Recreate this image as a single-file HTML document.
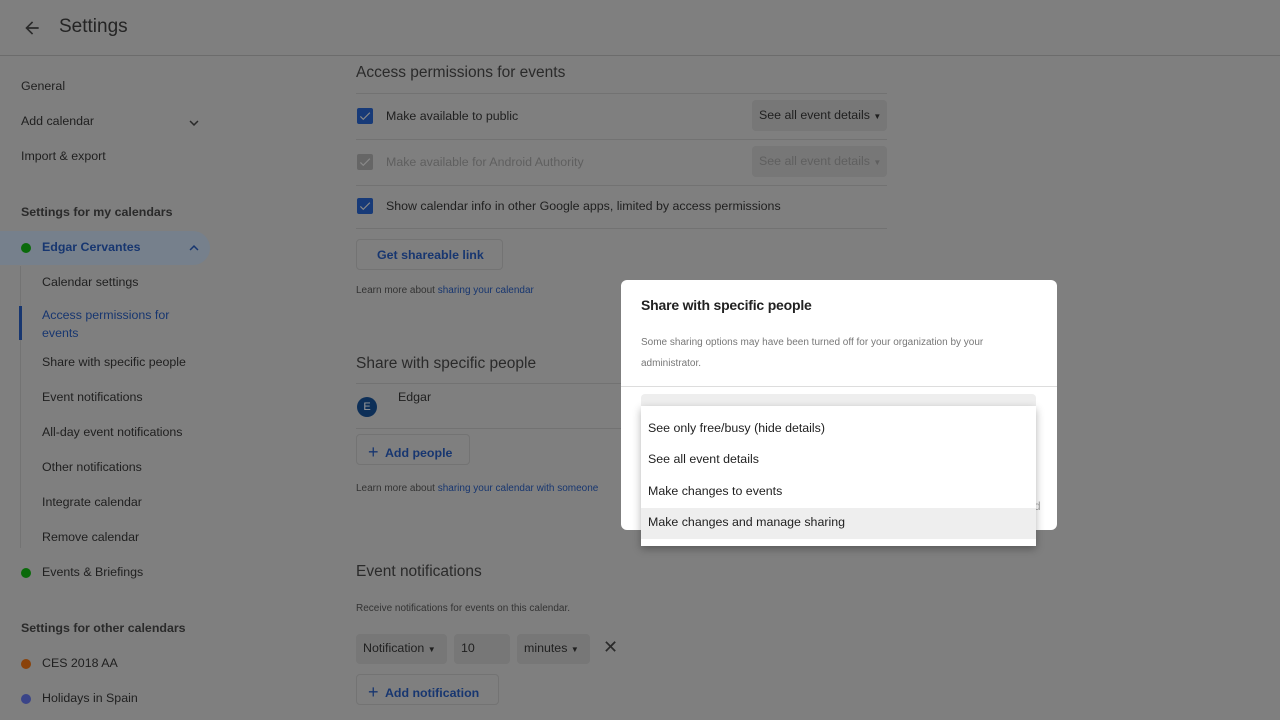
<!DOCTYPE html><html><head><style>
body{margin:0;width:1280px;height:720px;overflow:hidden;background:#7f7f7f;font-family:"Liberation Sans",Arial,sans-serif;color:#1f1f1f;position:relative}
.a{position:absolute;white-space:nowrap}
.s{font-size:12.4px}
.blue{color:#173670}
.line{position:absolute;height:1px;background:#727272}
.cb{position:absolute;width:16px;height:16px;background:#173a78;border-radius:2px}
.cb svg{position:absolute;left:1px;top:1px}
.btn{position:absolute;border:1px solid #737373;border-radius:4px;box-sizing:border-box}
.dd{position:absolute;background:#777;border-radius:4px}
.dot{position:absolute;width:10px;height:10px;border-radius:50%}
</style></head><body>
<div class="line" style="left:0;top:55px;width:1280px;background:#6c6c6c"></div>
<svg class="a" style="left:22px;top:18px" width="20" height="20" viewBox="0 0 24 24"><path d="M20 11H7.8l5.6-5.6L12 4l-8 8 8 8 1.4-1.4L7.8 13H20z" fill="#2a2a2a"/></svg>
<div class="a" style="left:59px;top:16px;font-size:19px;color:#242424">Settings</div>
<div class="a s" style="left:21px;top:79px">General</div>
<div class="a s" style="left:21px;top:114px">Add calendar</div>
<svg class="a" style="left:185px;top:114px" width="18" height="18" viewBox="0 0 24 24"><path d="M7.4 8.6L12 13.2l4.6-4.6L18 10l-6 6-6-6z" fill="#2a2a2a"/></svg>
<div class="a s" style="left:21px;top:149px">Import &amp; export</div>
<div class="a s" style="left:21px;top:205px;font-weight:bold;color:#2a2a2a">Settings for my calendars</div>
<div class="a" style="left:0;top:231px;width:210px;height:34px;background:#76808c;border-radius:0 17px 17px 0"></div>
<div class="dot" style="left:21px;top:243px;background:#0a6a0a"></div>
<div class="a s blue" style="left:42px;top:240px;font-weight:bold">Edgar Cervantes</div>
<svg class="a" style="left:185px;top:239px" width="18" height="18" viewBox="0 0 24 24"><path d="M7.4 15.4L12 10.8l4.6 4.6L18 14l-6-6-6 6z" fill="#173670"/></svg>
<div class="a" style="left:20px;top:266px;width:1px;height:282px;background:#737373"></div>
<div class="a" style="left:19px;top:306px;width:3px;height:34px;background:#173670"></div>
<div class="a s" style="left:42px;top:275px">Calendar settings</div>
<div class="a s blue" style="left:42px;top:306px;line-height:18px">Access permissions for<br>events</div>
<div class="a s" style="left:42px;top:355px">Share with specific people</div>
<div class="a s" style="left:42px;top:390px">Event notifications</div>
<div class="a s" style="left:42px;top:425px">All-day event notifications</div>
<div class="a s" style="left:42px;top:460px">Other notifications</div>
<div class="a s" style="left:42px;top:495px">Integrate calendar</div>
<div class="a s" style="left:42px;top:530px">Remove calendar</div>
<div class="dot" style="left:21px;top:568px;background:#0a6a0a"></div>
<div class="a s" style="left:42px;top:565px">Events &amp; Briefings</div>
<div class="a s" style="left:21px;top:621px;font-weight:bold;color:#2a2a2a">Settings for other calendars</div>
<div class="dot" style="left:21px;top:659px;background:#8a420a"></div>
<div class="a s" style="left:42px;top:656px">CES 2018 AA</div>
<div class="dot" style="left:21px;top:694px;background:#3a4488"></div>
<div class="a s" style="left:42px;top:691px">Holidays in Spain</div>

<div class="a" style="left:356px;top:64px;font-size:15.5px;color:#2a2a2a">Access permissions for events</div>
<div class="line" style="left:356px;top:93px;width:531px"></div>
<div class="cb" style="left:357px;top:108px"><svg width="14" height="14" viewBox="0 0 24 24"><path d="M9 16.2L4.8 12l-1.4 1.4L9 19 21 7l-1.4-1.4z" fill="#888"/></svg></div>
<div class="a s" style="left:386px;top:109px">Make available to public</div>
<div class="dd" style="left:752px;top:100px;width:135px;height:31px"></div>
<div class="a s" style="left:759px;top:108px">See all event details <span style="font-size:8px">▼</span></div>
<div class="line" style="left:356px;top:139px;width:531px"></div>
<div class="cb" style="left:357px;top:154px;background:#666"><svg width="14" height="14" viewBox="0 0 24 24"><path d="M9 16.2L4.8 12l-1.4 1.4L9 19 21 7l-1.4-1.4z" fill="#8a8a8a"/></svg></div>
<div class="a s" style="left:386px;top:155px;color:#5f5f5f">Make available for Android Authority</div>
<div class="dd" style="left:752px;top:146px;width:135px;height:31px"></div>
<div class="a s" style="left:759px;top:154px;color:#5f5f5f">See all event details <span style="font-size:8px">▼</span></div>
<div class="line" style="left:356px;top:185px;width:531px"></div>
<div class="cb" style="left:357px;top:198px"><svg width="14" height="14" viewBox="0 0 24 24"><path d="M9 16.2L4.8 12l-1.4 1.4L9 19 21 7l-1.4-1.4z" fill="#888"/></svg></div>
<div class="a s" style="left:386px;top:199px">Show calendar info in other Google apps, limited by access permissions</div>
<div class="line" style="left:356px;top:228px;width:531px"></div>
<div class="btn" style="left:356px;top:239px;width:147px;height:31px"></div>
<div class="a s blue" style="left:377px;top:248px;font-weight:bold">Get shareable link</div>
<div class="a" style="left:356px;top:285px;font-size:10px;color:#333">Learn more about <span class="blue">sharing your calendar</span></div>

<div class="a" style="left:356px;top:355px;font-size:15.5px;color:#2a2a2a">Share with specific people</div>
<div class="line" style="left:356px;top:383px;width:270px"></div>
<div class="a" style="left:357px;top:397px;width:20px;height:20px;border-radius:50%;background:#0d2f58;color:#999;font-size:11px;text-align:center;line-height:20px">E</div>
<div class="a s" style="left:398px;top:390px">Edgar</div>
<div class="line" style="left:356px;top:428px;width:270px"></div>
<div class="btn" style="left:356px;top:434px;width:114px;height:31px"></div>
<div class="a s blue" style="left:368px;top:441px;font-weight:bold"><span style="font-size:18px;font-weight:normal;position:relative;top:1px">+</span>&nbsp; Add people</div>
<div class="a" style="left:356px;top:483px;font-size:10px;color:#333">Learn more about <span class="blue">sharing your calendar with someone</span></div>

<div class="a" style="left:356px;top:563px;font-size:15.5px;color:#2a2a2a">Event notifications</div>
<div class="a" style="left:356px;top:603px;font-size:10px;color:#333">Receive notifications for events on this calendar.</div>
<div class="dd" style="left:356px;top:634px;width:91px;height:30px"></div>
<div class="a s" style="left:363px;top:641px">Notification <span style="font-size:8px">▼</span></div>
<div class="dd" style="left:454px;top:634px;width:56px;height:30px"></div>
<div class="a s" style="left:461px;top:641px">10</div>
<div class="dd" style="left:517px;top:634px;width:73px;height:30px"></div>
<div class="a s" style="left:524px;top:641px">minutes <span style="font-size:8px">▼</span></div>
<div class="a" style="left:603px;top:637px;font-size:18px;color:#2a2a2a">✕</div>
<div class="btn" style="left:356px;top:674px;width:143px;height:31px"></div>
<div class="a s blue" style="left:368px;top:681px;font-weight:bold"><span style="font-size:18px;font-weight:normal;position:relative;top:1px">+</span>&nbsp; Add notification</div>

<div class="a" style="left:621px;top:280px;width:436px;height:250px;background:#fff;border-radius:6px"></div>
<div class="a" style="left:641px;top:297px;font-size:14px;color:#222;font-weight:bold;letter-spacing:-0.2px">Share with specific people</div>
<div class="a" style="left:641px;top:332px;font-size:10px;color:#777;line-height:21px">Some sharing options may have been turned off for your organization by your<br>administrator.</div>
<div class="a" style="left:621px;top:386px;width:436px;height:1px;background:#ddd"></div>
<div class="a" style="left:641px;top:394px;width:395px;height:14px;background:#eee;border-radius:4px 4px 0 0"></div>
<div class="a" style="left:1034px;top:499px;font-size:12px;color:#aaa">d</div>
<div class="a" style="left:641px;top:406px;width:395px;height:140px;background:#fff;box-shadow:0 3px 8px rgba(0,0,0,.3)"></div>
<div class="a" style="left:641px;top:508px;width:395px;height:31px;background:#eee"></div>
<div class="a s" style="left:648px;top:421px">See only free/busy (hide details)</div>
<div class="a s" style="left:648px;top:452px">See all event details</div>
<div class="a s" style="left:648px;top:484px">Make changes to events</div>
<div class="a s" style="left:648px;top:515px">Make changes and manage sharing</div>
</body></html>
